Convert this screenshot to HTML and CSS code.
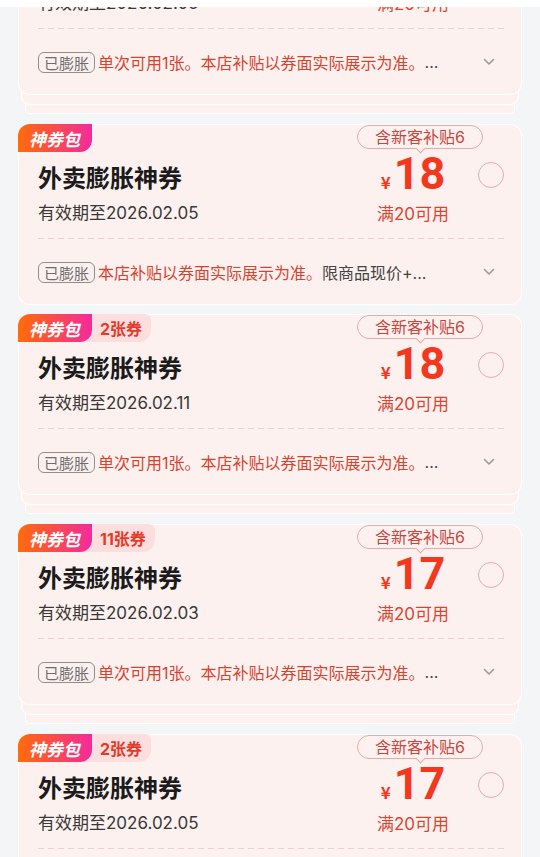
FILE: index.html
```html
<!DOCTYPE html>
<html lang="zh-CN">
<head>
<meta charset="utf-8">
<title>神券</title>
<link rel="stylesheet" href="styles.css">
</head>
<body>
<div class="topbar"></div>
<div class="list">

  <div class="card stacked">
    <div class="main">
      <div class="info">
        <div class="tags"><span class="tag-pack">神券包</span><span class="tag-count">2张券</span></div>
        <div class="title">外卖膨胀神券</div>
        <div class="date">有效期至2026.02.05</div>
      </div>
      <div class="price">
        <div class="pill">含新客补贴6</div>
        <div class="amount"><span class="yen">¥</span><span class="num">18</span></div>
        <div class="cond">满20可用</div>
      </div>
      <div class="radio"></div>
    </div>
    <div class="dash"></div>
    <div class="foot">
      <span class="badge">已膨胀</span><span class="rule">单次可用1张。本店补贴以券面实际展示为准。</span><span class="more">...</span>
      <svg class="chev" width="12" height="8" viewBox="0 0 12 8"><path d="M1.5 1.5 L6 6 L10.5 1.5" fill="none" stroke="#9b9b9b" stroke-width="1.6" stroke-linecap="round" stroke-linejoin="round"/></svg>
    </div>
  </div>

  <div class="card">
    <div class="main">
      <div class="info">
        <div class="tags"><span class="tag-pack">神券包</span></div>
        <div class="title">外卖膨胀神券</div>
        <div class="date">有效期至2026.02.05</div>
      </div>
      <div class="price">
        <div class="pill">含新客补贴6</div>
        <div class="amount"><span class="yen">¥</span><span class="num">18</span></div>
        <div class="cond">满20可用</div>
      </div>
      <div class="radio"></div>
    </div>
    <div class="dash"></div>
    <div class="foot">
      <span class="badge">已膨胀</span><span class="rule">本店补贴以券面实际展示为准。</span><span class="more">限商品现价+...</span>
      <svg class="chev" width="12" height="8" viewBox="0 0 12 8"><path d="M1.5 1.5 L6 6 L10.5 1.5" fill="none" stroke="#9b9b9b" stroke-width="1.6" stroke-linecap="round" stroke-linejoin="round"/></svg>
    </div>
  </div>

  <div class="card stacked">
    <div class="main">
      <div class="info">
        <div class="tags"><span class="tag-pack">神券包</span><span class="tag-count">2张券</span></div>
        <div class="title">外卖膨胀神券</div>
        <div class="date">有效期至2026.02.11</div>
      </div>
      <div class="price">
        <div class="pill">含新客补贴6</div>
        <div class="amount"><span class="yen">¥</span><span class="num">18</span></div>
        <div class="cond">满20可用</div>
      </div>
      <div class="radio"></div>
    </div>
    <div class="dash"></div>
    <div class="foot">
      <span class="badge">已膨胀</span><span class="rule">单次可用1张。本店补贴以券面实际展示为准。</span><span class="more">...</span>
      <svg class="chev" width="12" height="8" viewBox="0 0 12 8"><path d="M1.5 1.5 L6 6 L10.5 1.5" fill="none" stroke="#9b9b9b" stroke-width="1.6" stroke-linecap="round" stroke-linejoin="round"/></svg>
    </div>
  </div>

  <div class="card stacked">
    <div class="main">
      <div class="info">
        <div class="tags"><span class="tag-pack">神券包</span><span class="tag-count">11张券</span></div>
        <div class="title">外卖膨胀神券</div>
        <div class="date">有效期至2026.02.03</div>
      </div>
      <div class="price">
        <div class="pill">含新客补贴6</div>
        <div class="amount"><span class="yen">¥</span><span class="num">17</span></div>
        <div class="cond">满20可用</div>
      </div>
      <div class="radio"></div>
    </div>
    <div class="dash"></div>
    <div class="foot">
      <span class="badge">已膨胀</span><span class="rule">单次可用1张。本店补贴以券面实际展示为准。</span><span class="more">...</span>
      <svg class="chev" width="12" height="8" viewBox="0 0 12 8"><path d="M1.5 1.5 L6 6 L10.5 1.5" fill="none" stroke="#9b9b9b" stroke-width="1.6" stroke-linecap="round" stroke-linejoin="round"/></svg>
    </div>
  </div>

  <div class="card stacked">
    <div class="main">
      <div class="info">
        <div class="tags"><span class="tag-pack">神券包</span><span class="tag-count">2张券</span></div>
        <div class="title">外卖膨胀神券</div>
        <div class="date">有效期至2026.02.05</div>
      </div>
      <div class="price">
        <div class="pill">含新客补贴6</div>
        <div class="amount"><span class="yen">¥</span><span class="num">17</span></div>
        <div class="cond">满20可用</div>
      </div>
      <div class="radio"></div>
    </div>
    <div class="dash"></div>
    <div class="foot">
      <span class="badge">已膨胀</span><span class="rule">单次可用1张。本店补贴以券面实际展示为准。</span><span class="more">...</span>
      <svg class="chev" width="12" height="8" viewBox="0 0 12 8"><path d="M1.5 1.5 L6 6 L10.5 1.5" fill="none" stroke="#9b9b9b" stroke-width="1.6" stroke-linecap="round" stroke-linejoin="round"/></svg>
    </div>
  </div>

</div>
</body>
</html>
```

FILE: styles.css
```css
html, body {
  margin: 0;
  padding: 0;
}
body {
  background: #f4f5f7;
  font-family: "Noto Sans CJK SC", sans-serif;
  overflow: hidden;
  height: 857px;
}
.topbar {
  position: fixed;
  top: 0;
  left: 0;
  right: 0;
  height: 7px;
  background: #ffffff;
  z-index: 5;
}
.list {
  padding: 0 18px;
  margin-top: -86px;
}
.card {
  background: #fdf1ef;
  border-radius: 12px;
  height: 181px;
  margin-bottom: 9px;
  box-shadow: inset 0 0 0 1px #ffffff;
}
.card.stacked {
  margin-bottom: 29px;
  box-shadow: inset 0 0 0 1px #ffffff,
    0 13px 0 -4px #fdf1ef,
    0 13px 0 -3px #ffffff,
    0 26px 0 -8px #fdf1ef,
    0 26px 0 -7px #ffffff;
}
.main {
  display: grid;
  grid-template-columns: 1fr 126px 21px;
  padding-right: 18px;
  height: 114px;
}
.info {
  display: flex;
  flex-direction: column;
}
.tags {
  display: flex;
  height: 28px;
}
.tag-pack {
  position: relative;
  z-index: 1;
  display: flex;
  align-items: center;
  height: 28px;
  padding: 0 12px 0 11px;
  border-radius: 12px 0 12px 0;
  background: linear-gradient(90deg, #ff6c0a 0%, #fb4a4e 50%, #f42a9e 100%);
  color: #ffffff;
  font-size: 17px;
  font-weight: 700;
  font-style: italic;
}
.tag-count {
  display: flex;
  align-items: center;
  height: 28px;
  margin-left: -12px;
  padding: 0 9px 0 20px;
  border-radius: 0 6px 12px 0;
  background: #fcdede;
  color: #e63a28;
  font-size: 16px;
  font-weight: 700;
  font-family: Inter, "Noto Sans CJK SC", sans-serif;
}
.title {
  margin-top: 9px;
  padding-left: 20px;
  font-size: 24px;
  line-height: 32px;
  font-weight: 700;
  color: #1b1b1b;
}
.date {
  margin-top: 8px;
  padding-left: 20px;
  font-family: Inter, "Noto Sans CJK SC", sans-serif;
  font-size: 17px;
  line-height: 24px;
  color: #383838;
}
.price {
  display: flex;
  flex-direction: column;
  align-items: center;
}
.pill {
  position: relative;
  box-sizing: border-box;
  width: 126px;
  height: 24px;
  margin-top: 1px;
  border: 1px solid #e3aca8;
  border-radius: 12px;
  text-align: center;
  font-family: Inter, "Noto Sans CJK SC", sans-serif;
  font-size: 16px;
  line-height: 22px;
  color: #c8463d;
}
.pill::after {
  content: "";
  position: absolute;
  left: 50%;
  bottom: -4px;
  width: 6px;
  height: 6px;
  margin-left: -3px;
  background: #fdf1ef;
  border-right: 1px solid #e3aca8;
  border-bottom: 1px solid #e3aca8;
  transform: rotate(45deg);
}
.amount {
  display: flex;
  align-items: baseline;
  height: 45px;
  margin-top: 2px;
  padding-right: 14px;
  color: #f2391f;
  line-height: 45px;
}
.yen {
  font-family: "Noto Sans CJK SC", sans-serif;
  font-size: 17px;
  font-weight: 700;
  margin-right: 3px;
}
.num {
  font-family: Roboto, sans-serif;
  font-size: 45px;
  font-weight: 700;
}
.cond {
  margin-top: 7px;
  padding-right: 14px;
  font-family: Inter, "Noto Sans CJK SC", sans-serif;
  font-size: 17px;
  line-height: 22px;
  color: #db4430;
}
.radio {
  box-sizing: border-box;
  width: 26px;
  height: 26px;
  margin-top: 38px;
  margin-left: -5px;
  border: 1.5px solid #e6aab2;
  border-radius: 50%;
}
.dash {
  height: 1px;
  margin: 0 17px 0 20px;
  background-image: linear-gradient(90deg, #ebd2ce 60%, transparent 60%);
  background-size: 10px 1px;
}
.foot {
  display: flex;
  align-items: center;
  height: 66px;
  padding: 0 27px 0 20px;
  font-family: Inter, "Noto Sans CJK SC", sans-serif;
  font-size: 16px;
  white-space: nowrap;
}
.badge {
  box-sizing: border-box;
  height: 21px;
  padding: 0 5px;
  margin-right: 3px;
  border: 1px solid #8e8e8e;
  border-radius: 6px;
  font-family: "Noto Sans CJK SC", sans-serif;
  font-size: 15px;
  line-height: 19px;
  color: #6e6e6e;
}
.rule {
  color: #d6432f;
}
.more {
  color: #444444;
}
.chev {
  margin-left: auto;
}
```
